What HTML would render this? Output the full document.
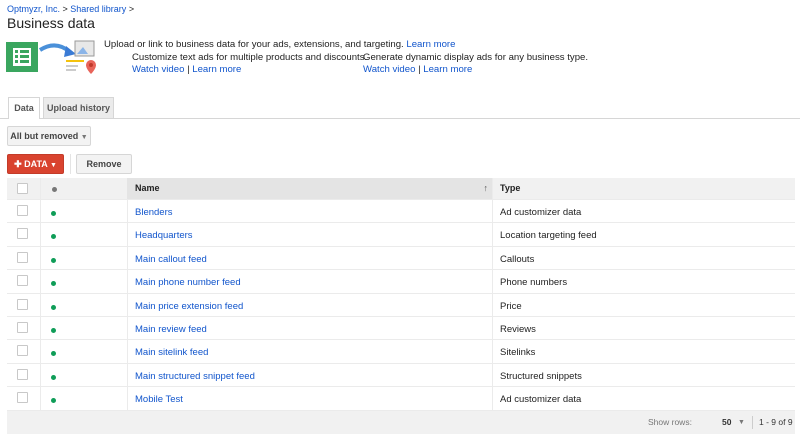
<!DOCTYPE html>
<html><head><style>
body{margin:0;width:800px;height:440px;background:#fff;font-family:"Liberation Sans",Arial,sans-serif;font-size:9.5px;color:#222;position:relative;overflow:hidden}
a{color:#1155cc;text-decoration:none}
.abs{position:absolute}
.btn{position:absolute;border:1px solid #d6d6d6;background:#f3f3f3;border-radius:2px;font-weight:bold;font-size:9px;color:#444;box-sizing:border-box;text-align:center}
.row{position:absolute;left:7px;width:788px;height:23.4px;border-bottom:1px solid #ebebeb;box-sizing:border-box;font-size:9.5px;line-height:25px}
.row>div{position:absolute;top:0;height:100%}
.c1{left:0;width:33px;border-right:1px solid #ebebeb}
.c2{left:33px;width:87px;border-right:1px solid #ebebeb}
.c3{left:120px;width:366px;border-right:1px solid #ebebeb;padding-left:8px;box-sizing:border-box}
.c4{left:486px;padding-left:7px}
.hd{background:#f1f1f1;font-weight:bold;font-size:9px}
.hd .c3{background:#e4e4e4}
.cb{width:9px;height:9px;border:1px solid #c8c8c8;background:#fff;margin:5px 0 0 10px;border-radius:1px}
.dot{width:5px;height:5px;border-radius:50%;background:#0f9d58;margin:11px 0 0 11px}
</style></head><body>
<div class="abs" style="left:7px;top:4px;font-size:9px"><a>Optmyzr, Inc.</a> &gt; <a>Shared library</a> &gt;</div>
<div class="abs" style="left:7px;top:15px;font-size:14px;color:#222">Business data</div>
<svg class="abs" style="left:6px;top:40px" width="94" height="36">
<rect x="0" y="2" width="32" height="30" fill="#3aa65f"/>
<rect x="7" y="8" width="18" height="18" fill="#fff"/>
<rect x="9" y="10" width="3" height="3" fill="#3aa65f"/><rect x="14" y="10" width="9" height="3" fill="#3aa65f"/>
<rect x="9" y="15" width="3" height="3" fill="#3aa65f"/><rect x="14" y="15" width="9" height="3" fill="#3aa65f"/>
<rect x="9" y="20" width="3" height="3" fill="#3aa65f"/><rect x="14" y="20" width="9" height="3" fill="#3aa65f"/>
<path d="M34 10 Q50 0 64 12" stroke="#4a90d9" stroke-width="4" fill="none"/>
<polygon points="60,6 70,14 58,17" fill="#3a7bd5"/>
<rect x="69" y="1" width="19" height="15" fill="#e8e8e8" stroke="#999"/>
<polygon points="71,14 77,7 82,14" fill="#8ab4e8"/>
<rect x="60" y="20" width="18" height="2" fill="#f4c20d"/>
<rect x="60" y="25" width="12" height="2" fill="#ccc"/><rect x="60" y="29" width="10" height="2" fill="#ccc"/>
<path d="M85 20a5 5 0 0 1 5 5c0 4-5 9-5 9s-5-5-5-9a5 5 0 0 1 5-5z" fill="#e8645a"/>
<circle cx="85" cy="25" r="2" fill="#c0392b"/>
</svg>
<div class="abs" style="left:104px;top:39px;font-size:9.6px">Upload or link to business data for your ads, extensions, and targeting. <a>Learn more</a></div>
<div class="abs" style="left:132px;top:52px;font-size:9.6px;line-height:12px">Customize text ads for multiple products and discounts.<br><a>Watch video</a> | <a>Learn more</a></div>
<div class="abs" style="left:362px;top:52px;font-size:9.6px;line-height:12px;padding-left:1px">Generate dynamic display ads for any business type.<br><a>Watch video</a> | <a>Learn more</a></div>
<div class="abs" style="left:0;top:118px;width:800px;height:1px;background:#d6d6d6"></div>
<div class="abs" style="left:8px;top:97px;width:32px;height:22px;background:#fff;border:1px solid #d6d6d6;border-bottom:none;box-sizing:border-box;font-weight:bold;color:#555;text-align:center;line-height:21px;font-size:9px">Data</div>
<div class="abs" style="left:43px;top:97px;width:71px;height:21px;background:#ebebeb;border:1px solid #d6d6d6;border-bottom:none;box-sizing:border-box;font-weight:bold;color:#555;text-align:center;line-height:20px;font-size:9px">Upload history</div>
<div class="btn" style="left:7px;top:126px;width:84px;height:20px;line-height:18px">All but removed <span style="font-size:7px;color:#777">▼</span></div>
<div class="btn" style="left:7px;top:154px;width:57px;height:20px;line-height:18px;background:#d9432f;border-color:#c33b29;color:#fff">✚ DATA <span style="font-size:7px">▼</span></div>
<div class="abs" style="left:70px;top:154px;width:1px;height:20px;background:#e4e4e4"></div>
<div class="btn" style="left:76px;top:154px;width:56px;height:20px;line-height:18px">Remove</div>

<div class="row hd" style="top:178px;height:22px;line-height:21px"><div class="c1"><div class="cb"></div></div><div class="c2"><div style="width:5px;height:5px;border-radius:50%;background:#777;margin:9px 0 0 12px"></div></div><div class="c3">Name<span style="float:right;margin-right:4px;color:#555">↑</span></div><div class="c4">Type</div></div>
<div class="row" style="top:200px"><div class="c1"><div class="cb"></div></div><div class="c2"><div class="dot"></div></div><div class="c3"><a>Blenders</a></div><div class="c4">Ad customizer data</div></div>
<div class="row" style="top:223.4px"><div class="c1"><div class="cb"></div></div><div class="c2"><div class="dot"></div></div><div class="c3"><a>Headquarters</a></div><div class="c4">Location targeting feed</div></div>
<div class="row" style="top:246.8px"><div class="c1"><div class="cb"></div></div><div class="c2"><div class="dot"></div></div><div class="c3"><a>Main callout feed</a></div><div class="c4">Callouts</div></div>
<div class="row" style="top:270.2px"><div class="c1"><div class="cb"></div></div><div class="c2"><div class="dot"></div></div><div class="c3"><a>Main phone number feed</a></div><div class="c4">Phone numbers</div></div>
<div class="row" style="top:293.6px"><div class="c1"><div class="cb"></div></div><div class="c2"><div class="dot"></div></div><div class="c3"><a>Main price extension feed</a></div><div class="c4">Price</div></div>
<div class="row" style="top:317px"><div class="c1"><div class="cb"></div></div><div class="c2"><div class="dot"></div></div><div class="c3"><a>Main review feed</a></div><div class="c4">Reviews</div></div>
<div class="row" style="top:340.4px"><div class="c1"><div class="cb"></div></div><div class="c2"><div class="dot"></div></div><div class="c3"><a>Main sitelink feed</a></div><div class="c4">Sitelinks</div></div>
<div class="row" style="top:363.8px"><div class="c1"><div class="cb"></div></div><div class="c2"><div class="dot"></div></div><div class="c3"><a>Main structured snippet feed</a></div><div class="c4">Structured snippets</div></div>
<div class="row" style="top:387.2px"><div class="c1"><div class="cb"></div></div><div class="c2"><div class="dot"></div></div><div class="c3"><a>Mobile Test</a></div><div class="c4">Ad customizer data</div></div>

<div class="abs" style="left:7px;top:410.6px;width:788px;height:23px;background:#f1f1f1;font-size:8.5px;color:#777;line-height:23px">
<span style="position:absolute;left:641px">Show rows:</span>
<span style="position:absolute;left:715px;color:#333;font-weight:bold">50</span>
<span style="position:absolute;left:731px;font-size:7px">▼</span>
<span style="position:absolute;left:745px;top:5px;width:1px;height:13px;background:#ccc"></span>
<span style="position:absolute;left:752px;color:#333">1 - 9 of 9</span>
</div>
</body></html>
